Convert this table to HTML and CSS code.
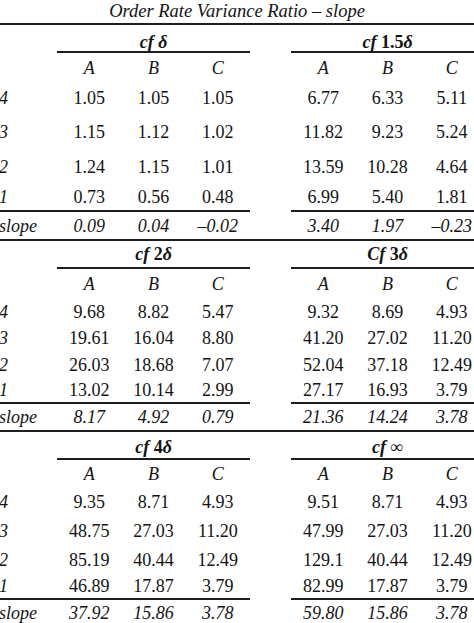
FILE: index.html
```html
<!DOCTYPE html>
<html>
<head>
<meta charset="utf-8">
<link rel="stylesheet" href="styles.css">
</head>
<body>
<div class="title">Order Rate Variance Ratio – slope</div>
<div class="sheet">
  <div class="row hdr h28 pt8"><div class="cell lab"></div><div class="cell grp"><b><i>cf</i> <i>δ</i></b></div><div class="cell gap"></div><div class="cell grp"><b><i>cf</i> 1.5<i>δ</i></b></div></div>
  <div class="row h29"><div class="cell lab"></div><div class="cell it">A</div><div class="cell it">B</div><div class="cell it">C</div><div class="cell gap"></div><div class="cell it">A</div><div class="cell it">B</div><div class="cell it">C</div></div>
  <div class="row h31"><div class="cell lab">4</div><div class="cell">1.05</div><div class="cell">1.05</div><div class="cell">1.05</div><div class="cell gap"></div><div class="cell">6.77</div><div class="cell">6.33</div><div class="cell">5.11</div></div>
  <div class="row h37"><div class="cell lab">3</div><div class="cell">1.15</div><div class="cell">1.12</div><div class="cell">1.02</div><div class="cell gap"></div><div class="cell">11.82</div><div class="cell">9.23</div><div class="cell">5.24</div></div>
  <div class="row h34"><div class="cell lab">2</div><div class="cell">1.24</div><div class="cell">1.15</div><div class="cell">1.01</div><div class="cell gap"></div><div class="cell">13.59</div><div class="cell">10.28</div><div class="cell">4.64</div></div>
  <div class="row last h28"><div class="cell lab">1</div><div class="cell">0.73</div><div class="cell">0.56</div><div class="cell">0.48</div><div class="cell gap"></div><div class="cell">6.99</div><div class="cell">5.40</div><div class="cell">1.81</div></div>
  <div class="row slope h29"><div class="cell lab">slope</div><div class="cell">0.09</div><div class="cell">0.04</div><div class="cell">–0.02</div><div class="cell gap"></div><div class="cell">3.40</div><div class="cell">1.97</div><div class="cell">–0.23</div></div>

  <div class="row hdr h28"><div class="cell lab"></div><div class="cell grp"><b><i>cf</i> 2<i>δ</i></b></div><div class="cell gap"></div><div class="cell grp"><b><i>Cf</i> 3<i>δ</i></b></div></div>
  <div class="row h29"><div class="cell lab"></div><div class="cell it">A</div><div class="cell it">B</div><div class="cell it">C</div><div class="cell gap"></div><div class="cell it">A</div><div class="cell it">B</div><div class="cell it">C</div></div>
  <div class="row h27"><div class="cell lab">4</div><div class="cell">9.68</div><div class="cell">8.82</div><div class="cell">5.47</div><div class="cell gap"></div><div class="cell">9.32</div><div class="cell">8.69</div><div class="cell">4.93</div></div>
  <div class="row h26"><div class="cell lab">3</div><div class="cell">19.61</div><div class="cell">16.04</div><div class="cell">8.80</div><div class="cell gap"></div><div class="cell">41.20</div><div class="cell">27.02</div><div class="cell">11.20</div></div>
  <div class="row h27"><div class="cell lab">2</div><div class="cell">26.03</div><div class="cell">18.68</div><div class="cell">7.07</div><div class="cell gap"></div><div class="cell">52.04</div><div class="cell">37.18</div><div class="cell">12.49</div></div>
  <div class="row last h26"><div class="cell lab">1</div><div class="cell">13.02</div><div class="cell">10.14</div><div class="cell">2.99</div><div class="cell gap"></div><div class="cell">27.17</div><div class="cell">16.93</div><div class="cell">3.79</div></div>
  <div class="row slope h28"><div class="cell lab">slope</div><div class="cell">8.17</div><div class="cell">4.92</div><div class="cell">0.79</div><div class="cell gap"></div><div class="cell">21.36</div><div class="cell">14.24</div><div class="cell">3.78</div></div>

  <div class="row hdr h28 pt4"><div class="cell lab"></div><div class="cell grp"><b><i>cf</i> 4<i>δ</i></b></div><div class="cell gap"></div><div class="cell grp"><b><i>cf</i></b> <span class="inf">∞</span></div></div>
  <div class="row h27"><div class="cell lab"></div><div class="cell it">A</div><div class="cell it">B</div><div class="cell it">C</div><div class="cell gap"></div><div class="cell it">A</div><div class="cell it">B</div><div class="cell it">C</div></div>
  <div class="row h30"><div class="cell lab">4</div><div class="cell">9.35</div><div class="cell">8.71</div><div class="cell">4.93</div><div class="cell gap"></div><div class="cell">9.51</div><div class="cell">8.71</div><div class="cell">4.93</div></div>
  <div class="row h28"><div class="cell lab">3</div><div class="cell">48.75</div><div class="cell">27.03</div><div class="cell">11.20</div><div class="cell gap"></div><div class="cell">47.99</div><div class="cell">27.03</div><div class="cell">11.20</div></div>
  <div class="row h29"><div class="cell lab">2</div><div class="cell">85.19</div><div class="cell">40.44</div><div class="cell">12.49</div><div class="cell gap"></div><div class="cell">129.1</div><div class="cell">40.44</div><div class="cell">12.49</div></div>
  <div class="row last h26"><div class="cell lab">1</div><div class="cell">46.89</div><div class="cell">17.87</div><div class="cell">3.79</div><div class="cell gap"></div><div class="cell">82.99</div><div class="cell">17.87</div><div class="cell">3.79</div></div>
  <div class="row slope end h26"><div class="cell lab">slope</div><div class="cell">37.92</div><div class="cell">15.86</div><div class="cell">3.78</div><div class="cell gap"></div><div class="cell">59.80</div><div class="cell">15.86</div><div class="cell">3.78</div></div>
</div>
</body>
</html>
```
FILE: styles.css
```css
html, body {
  margin: 0;
  padding: 0;
  background: #ffffff;
  overflow: hidden;
}
body {
  font-family: "Liberation Serif", "Times New Roman", serif;
  color: #141414;
  font-size: 18px;
}
.title {
  box-sizing: border-box;
  height: 25px;
  line-height: 23px;
  font-size: 18.5px;
  font-style: italic;
  text-align: center;
  border-bottom: 2px solid #1e1e1e;
}
.sheet {
  width: 485px;
  margin-left: -1px;
}
.row {
  display: grid;
  grid-template-columns: 58px repeat(3, 64.33px) 41px repeat(3, 64.33px);
  box-sizing: border-box;
}
.hdr {
  grid-template-columns: 58px 193px 41px 193px;
}
.cell {
  display: flex;
  align-items: center;
  justify-content: center;
  box-sizing: border-box;
  white-space: nowrap;
  line-height: 18px;
}
.lab {
  justify-content: flex-start;
  font-style: italic;
}
.it {
  font-style: italic;
}
.grp {
  border-bottom: 2px solid #1e1e1e;
}
.pt8 .grp { padding-top: 8px; }
.pt4 .grp { padding-top: 4px; }
.grp b { font-weight: bold; }
.inf { font-weight: normal; margin-left: 4px; }
.last .cell { border-bottom: 2px solid #1e1e1e; }
.last .gap { border-bottom: none; }
.slope { border-bottom: 2px solid #1e1e1e; font-style: italic; }
.slope.end { border-bottom: none; }
.h26 { height: 26px; }
.h27 { height: 27px; }
.h28 { height: 28px; }
.h29 { height: 29px; }
.h30 { height: 30px; }
.h31 { height: 31px; }
.h34 { height: 34px; }
.h37 { height: 37px; }
```
